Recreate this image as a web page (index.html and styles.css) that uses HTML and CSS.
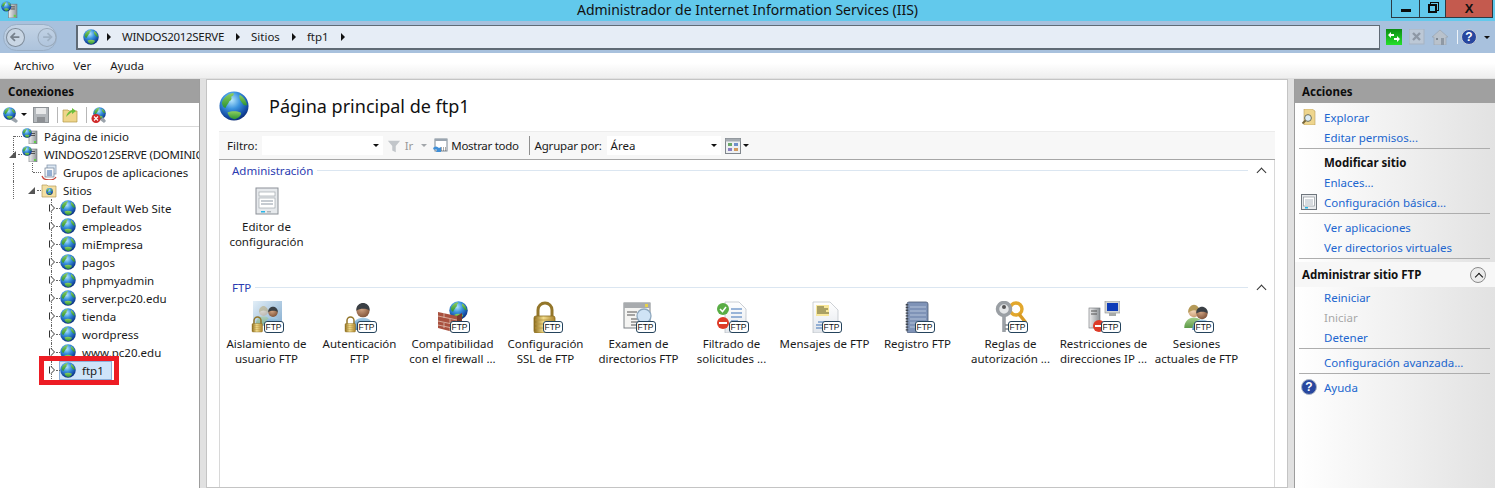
FILE: index.html
```html
<!DOCTYPE html>
<html lang="es">
<head>
  <meta charset="UTF-8">
  <title>Administrador de Internet Information Services (IIS)</title>
  <link rel="stylesheet" href="styles.css">
</head>
<body>
  <svg class="sprites" width="0" height="0">
    <defs>
      <radialGradient id="sea" cx="42%" cy="30%" r="75%">
        <stop offset="0" stop-color="#b5e6fc"/>
        <stop offset=".4" stop-color="#3a93de"/>
        <stop offset=".8" stop-color="#12479f"/>
        <stop offset="1" stop-color="#0a2466"/>
      </radialGradient>
      <linearGradient id="land" x1="0" y1="0" x2="0" y2="1">
        <stop offset="0" stop-color="#8fd05e"/>
        <stop offset="1" stop-color="#2c9334"/>
      </linearGradient>
      <linearGradient id="lock" x1="0" y1="0" x2="1" y2="0">
        <stop offset="0" stop-color="#8a6a1c"/>
        <stop offset=".45" stop-color="#f2dc8c"/>
        <stop offset="1" stop-color="#a8802a"/>
      </linearGradient>
      <linearGradient id="paper" x1="0" y1="0" x2="0" y2="1">
        <stop offset="0" stop-color="#ffffff"/>
        <stop offset="1" stop-color="#e3e7ec"/>
      </linearGradient>
      <linearGradient id="tower" x1="0" y1="0" x2="1" y2="0">
        <stop offset="0" stop-color="#f0f0f0"/>
        <stop offset="1" stop-color="#8d9296"/>
      </linearGradient>
      <linearGradient id="shirt" x1="0" y1="0" x2="0" y2="1">
        <stop offset="0" stop-color="#a9cfe8"/>
        <stop offset="1" stop-color="#4f88b8"/>
      </linearGradient>
      <linearGradient id="shirt-green" x1="0" y1="0" x2="0" y2="1">
        <stop offset="0" stop-color="#a6cf8c"/>
        <stop offset="1" stop-color="#5d9a48"/>
      </linearGradient>
      <radialGradient id="skin" cx="40%" cy="35%" r="70%">
        <stop offset="0" stop-color="#d4a684"/>
        <stop offset="1" stop-color="#7e5238"/>
      </radialGradient>
      <radialGradient id="skin-light" cx="40%" cy="35%" r="70%">
        <stop offset="0" stop-color="#f6dcc0"/>
        <stop offset="1" stop-color="#c99c72"/>
      </radialGradient>
      <linearGradient id="green-btn" x1="0" y1="0" x2="0" y2="1">
        <stop offset="0" stop-color="#0b8d12"/>
        <stop offset="1" stop-color="#25e02a"/>
      </linearGradient>
    </defs>

    <symbol id="globe" viewBox="0 0 32 32">
      <circle cx="16" cy="16" r="15.500" fill="url(#sea)"/>
      <path d="M3 13c1-5 6-10 12-11 2 1 0 3-2 4 1 2 0 4-2 5-1 3-3 4-4 7-2 0-3-2-4-5z" fill="url(#land)"/>
      <path d="M9 23c4-2 10-2 14 0 2 1-1 6-6 7-4 0-7-3-8-7z" fill="url(#land)"/>
      <path d="M22 4c4 2 7 6 8 11-2 1-4 0-5-2-2-2-4-5-3-9z" fill="url(#land)"/>
    </symbol>

    <symbol id="server" viewBox="0 0 16 16">
      <rect x="7" y="3" width="8" height="13" fill="url(#tower)" stroke="#70767b" stroke-width=".6"/>
      <rect x="9" y="5" width="4" height="1" fill="#555"/>
      <rect x="9" y="7" width="4" height="1" fill="#555"/>
      <rect x="12" y="13" width="2" height="2" fill="#5fce4a"/>
      <use href="#globe" x="0" y="0" width="10" height="10"/>
    </symbol>

    <symbol id="pools" viewBox="0 0 16 16">
      <rect x="6" y="1" width="9" height="9" fill="#dbe7f3" stroke="#7b8ea5" stroke-width=".7"/>
      <rect x="4" y="4" width="9" height="9" fill="url(#paper)" stroke="#6b7c92" stroke-width=".7"/>
      <path d="M6 7h5M6 9h5M6 11h5" stroke="#3d6fb0"/>
      <path d="M1 12c1 3 4 4 7 4s6-1 7-3" fill="none" stroke="#c6443a" stroke-width="1.300"/>
    </symbol>

    <symbol id="sites" viewBox="0 0 16 16">
      <path d="M1 3h5l1 1h8v11H1z" fill="#f3dfa2" stroke="#b69a56" stroke-width=".7"/>
      <use href="#globe" x="5" y="6" width="7" height="7"/>
    </symbol>

    <symbol id="folder-find" viewBox="0 0 16 16">
      <path d="M3 0h8l3 2v14H3z" fill="#eed58d" stroke="#b9a05c" stroke-width=".6"/>
      <circle cx="7" cy="9" r="3.400" fill="#dcecf7" stroke="#6f6f55"/>
      <path d="M4.500 11.500 1.500 14.500" stroke="#75653a" stroke-width="1.800"/>
    </symbol>

    <symbol id="form" viewBox="0 0 32 32">
      <rect x="5" y="4" width="22" height="26" fill="#e6e9ec" stroke="#8b9097"/>
      <rect x="8" y="8" width="16" height="4" fill="#fff" stroke="#a2a8ae" stroke-width=".7"/>
      <rect x="8" y="14" width="16" height="10" fill="#fff" stroke="#a2a8ae" stroke-width=".7"/>
      <path d="M10 17h12M10 20h12" stroke="#8d98a4"/>
      <rect x="10" y="27" width="4" height="1.500" fill="#28b5e8"/>
      <rect x="16" y="27" width="4" height="1.500" fill="#b0b5ba"/>
    </symbol>

    <symbol id="form-small" viewBox="0 0 16 16">
      <rect x=".5" y=".5" width="15" height="15" fill="#e9ebed" stroke="#6f767d"/>
      <rect x="2.500" y="3" width="11" height="9" fill="#fff" stroke="#8d949b" stroke-width=".7"/>
      <path d="M4 6h8M4 8h8M4 10h8" stroke="#8d98a4" stroke-width=".7"/>
      <rect x="4" y="13" width="3" height="1.500" fill="#28b5e8"/>
    </symbol>

    <symbol id="padlock" viewBox="0 0 32 32">
      <path d="M8 17v-8a7 7 0 0 1 14 0v8" fill="none" stroke="#93762a" stroke-width="3"/>
      <rect x="4" y="15" width="21" height="17" rx="2" fill="url(#lock)" stroke="#8a6d1e" stroke-width=".8"/>
      <path d="M5 19h19M5 23h19M5 27h19" stroke="#b8963f" stroke-width=".8"/>
    </symbol>

    <symbol id="person" viewBox="0 0 32 32">
      <path d="M3 32c0-9 6-14 13-14s13 5 13 14z" fill="url(#shirt)"/>
      <circle cx="16" cy="10" r="7.500" fill="url(#skin)"/>
      <path d="M8.500 10c-1-6 4-9 7.500-9s8.500 3 7.500 9c-3-3-11-3-15 0z" fill="#3a3f44"/>
    </symbol>

    <symbol id="person-light" viewBox="0 0 32 32">
      <path d="M3 32c0-9 6-14 13-14s13 5 13 14z" fill="url(#shirt-green)"/>
      <circle cx="16" cy="10" r="7.500" fill="url(#skin-light)"/>
      <path d="M8.500 12c-1-7 4-11 7.500-11s8.500 4 7.500 11c-3-5-11-5-15 0z" fill="#b59a58"/>
    </symbol>

    <symbol id="firewall" viewBox="0 0 32 32">
      <use href="#globe" x="12" y="0" width="19" height="19"/>
      <path d="M1 11l19 4v17L1 27z" fill="#a9513f"/>
      <path d="M20 15l5-3v15l-5 5z" fill="#7e3a2c"/>
      <path d="M1 15l19 4M1 20l19 4M1 24l19 4M7 12v5M13 18v5M7 22v5M13 26v4" stroke="#e0c2b4" stroke-width=".8"/>
    </symbol>

    <symbol id="browse" viewBox="0 0 32 32">
      <rect x="1" y="2" width="26" height="25" fill="#f4f4f2" stroke="#7d8186"/>
      <rect x="1" y="2" width="26" height="5" fill="#a8abae"/>
      <rect x="22" y="3" width="3" height="3" fill="#e6d24a"/>
      <path d="M4 11h10M4 14h8M8 18h8M8 21h8M8 24h8" stroke="#555"/>
      <circle cx="21" cy="15" r="7" fill="#cfe3f5" stroke="#8ea8bf" stroke-width="1.300"/>
    </symbol>

    <symbol id="request-filter" viewBox="0 0 32 32">
      <path d="M9 1h14l7 7v24H9z" fill="url(#paper)" stroke="#b4bac1" stroke-width=".7"/>
      <path d="M15 8h11M15 12h11M15 16h11M15 20h7" stroke="#3c73b8" stroke-width="1.200"/>
      <circle cx="7" cy="8" r="6" fill="#59ad45"/>
      <path d="M4 8l2.500 2.500L10 6" fill="none" stroke="#fff" stroke-width="1.500"/>
      <circle cx="7" cy="22" r="6" fill="#de3b28"/>
      <rect x="3" y="21" width="8" height="2" fill="#fff"/>
    </symbol>

    <symbol id="message" viewBox="0 0 32 32">
      <path d="M4 1h17l8 8v23H4z" fill="url(#paper)" stroke="#b8bdc3" stroke-width=".7"/>
      <rect x="7" y="4" width="13" height="11" fill="#f8e79a"/>
      <path d="M8 6h7M8 8h11M8 10h9M8 12h12" stroke="#5d5a2c"/>
      <path d="M9 21h14M7 24h12M7 27h10" stroke="#3c73b8" stroke-width="1.200"/>
    </symbol>

    <symbol id="logbook" viewBox="0 0 32 32">
      <rect x="5" y="1" width="21" height="31" rx="2" fill="#7f93b7" stroke="#4a5872" stroke-width=".8"/>
      <path d="M8 6h16M8 10h16M8 14h16M8 18h16M8 22h16M8 26h16" stroke="#b5c3da"/>
      <path d="M5 3v27" stroke="#40464f" stroke-width="2.600" stroke-dasharray="1.400 1.400"/>
    </symbol>

    <symbol id="keys" viewBox="0 0 32 32">
      <circle cx="21" cy="8" r="6" fill="none" stroke="#e2a72c" stroke-width="3.400"/>
      <path d="M24 13l7 9" stroke="#d89a24" stroke-width="3.400"/>
      <circle cx="9" cy="8" r="6.500" fill="#e4e6e8" stroke="#9a9fa4" stroke-width="3.500"/>
      <circle cx="9" cy="6" r="2" fill="#555"/>
      <path d="M9 14v17" stroke="#9ba0a6" stroke-width="3.600"/>
      <path d="M10 24h3M10 28h3" stroke="#81868b" stroke-width="1.500"/>
    </symbol>

    <symbol id="ip-limits" viewBox="0 0 32 32">
      <rect x="17" y="0" width="15" height="12" fill="#d4d6d4" stroke="#8a8d8b" stroke-width=".6"/>
      <rect x="19" y="2" width="11" height="8" fill="#0e3cb8"/>
      <rect x="21" y="12" width="7" height="3" fill="#a7aaa8"/>
      <rect x="1" y="7" width="11" height="20" fill="url(#tower)" stroke="#6d7175" stroke-width=".6"/>
      <path d="M3 10h6M3 13h6" stroke="#555"/>
      <circle cx="11" cy="25" r="6" fill="#de3b28"/>
      <rect x="7" y="24" width="8" height="2" fill="#fff"/>
    </symbol>

    <symbol id="arrow-left" viewBox="0 0 16 16">
      <path d="M13 8H4M8 3.500 3.500 8 8 12.500" fill="none" stroke="currentColor" stroke-width="2"/>
    </symbol>
  </svg>

  <div class="app">
    <header class="titlebar">
      <svg class="app-icon"><use href="#server"/></svg>
      <span class="title-text">Administrador de Internet Information Services (IIS)</span>
      <div class="win-buttons">
        <span class="win-btn win-min"><i></i></span>
        <span class="win-btn win-max"><i></i></span>
        <span class="win-btn win-close">X</span>
      </div>
    </header>

    <div class="navbar">
      <div class="nav-pill">
        <span class="nav-round nav-back"><svg><use href="#arrow-left"/></svg></span>
        <span class="nav-round nav-fwd"><svg><use href="#arrow-left"/></svg></span>
      </div>
      <div class="address">
        <svg class="icon16 addr-globe"><use href="#globe"/></svg>
        <span class="crumb-arrow"></span><span class="crumb crumb-server">WINDOS2012SERVE</span>
        <span class="crumb-arrow"></span><span class="crumb">Sitios</span>
        <span class="crumb-arrow"></span><span class="crumb">ftp1</span>
        <span class="crumb-arrow"></span>
      </div>
      <div class="nav-tools">
        <svg class="icon16" viewBox="0 0 16 16"><rect width="16" height="16" fill="url(#green-btn)"/><path d="M2 6l3-3v2h3v2H5v2zM14 10l-3 3v-2H8V9h3V7z" fill="#fff"/></svg>
        <svg class="icon16" viewBox="0 0 16 16"><rect width="15" height="15" fill="#bcc8d6" stroke="#a6b3c2"/><path d="M4 4l7 7M11 4l-7 7" stroke="#8e98a5" stroke-width="2.400"/></svg>
        <svg class="icon16" viewBox="0 0 16 16"><path d="M8 1 0 8h2v8h12V8h2z" fill="#b9c2cc" stroke="#98a2ad" stroke-width=".6"/><rect x="4" y="9" width="2" height="2" fill="#7f8993"/><rect x="9" y="9" width="3" height="7" fill="#8f99a4"/></svg>
        <span class="tool-sep"></span>
        <svg class="icon16 help-big" viewBox="0 0 16 16"><circle cx="8" cy="8" r="7.500" fill="#28479f" stroke="#c6cdd8"/><text x="8" y="12" class="help-mark">?</text></svg>
        <span class="caret caret-black"></span>
      </div>
    </div>

    <nav class="menubar">
      <span>Archivo</span>
      <span>Ver</span>
      <span>Ayuda</span>
    </nav>

    <main class="workspace">
      <aside class="connections">
        <h2 class="panel-head">Conexiones</h2>
        <div class="conn-tools">
          <svg class="icon16" viewBox="0 0 16 16"><use href="#globe" width="13" height="13"/><path d="M8 13l3-3 4 4-2 2z" fill="#9aa3ab"/></svg>
          <span class="caret caret-black"></span>
          <svg class="icon16" viewBox="0 0 16 16"><rect x=".5" y=".5" width="15" height="15" fill="#b4b8bc" stroke="#8e9296"/><rect x="3" y="1" width="10" height="6" fill="#e8e9ea"/><rect x="4" y="10" width="8" height="5" fill="#8d9094"/></svg>
          <span class="conn-sep"></span>
          <svg class="icon16" viewBox="0 0 16 16"><path d="M1 3h5l1 1h8v11H1z" fill="#efd58a" stroke="#b19848" stroke-width=".7"/><path d="M4 10c1-4 3-6 6-7V1l4 3-4 3V5c-2 1-4 3-6 5z" fill="#6cbf3c"/></svg>
          <span class="conn-sep"></span>
          <svg class="icon16" viewBox="0 0 16 16"><use href="#globe" x="2" y="0" width="13" height="13"/><path d="M9 13l3-3 3 4-2 2z" fill="#9aa3ab"/><circle cx="5" cy="11.500" r="4.500" fill="#cf2a2a"/><path d="M3 9.500l4 4M7 9.500l-4 4" stroke="#fff" stroke-width="1.100"/></svg>
        </div>
        <ul class="tree">
          <li class="tree-row lvl0 leaf-top"><span class="twist"></span><svg class="icon16"><use href="#server"/></svg><span class="tree-label">Página de inicio</span></li>
          <li class="tree-row lvl0"><span class="twist open"></span><svg class="icon16"><use href="#server"/></svg><span class="tree-label tree-server">WINDOS2012SERVE (DOMINIO\Administrador)</span></li>
          <li class="tree-row lvl1"><span class="twist"></span><svg class="icon16"><use href="#pools"/></svg><span class="tree-label">Grupos de aplicaciones</span></li>
          <li class="tree-row lvl1"><span class="twist open"></span><svg class="icon16"><use href="#sites"/></svg><span class="tree-label">Sitios</span></li>
          <li class="tree-row lvl2"><span class="twist closed"></span><svg class="icon16"><use href="#globe"/></svg><span class="tree-label">Default Web Site</span></li>
          <li class="tree-row lvl2"><span class="twist closed"></span><svg class="icon16"><use href="#globe"/></svg><span class="tree-label">empleados</span></li>
          <li class="tree-row lvl2"><span class="twist closed"></span><svg class="icon16"><use href="#globe"/></svg><span class="tree-label">miEmpresa</span></li>
          <li class="tree-row lvl2"><span class="twist closed"></span><svg class="icon16"><use href="#globe"/></svg><span class="tree-label">pagos</span></li>
          <li class="tree-row lvl2"><span class="twist closed"></span><svg class="icon16"><use href="#globe"/></svg><span class="tree-label">phpmyadmin</span></li>
          <li class="tree-row lvl2"><span class="twist closed"></span><svg class="icon16"><use href="#globe"/></svg><span class="tree-label">server.pc20.edu</span></li>
          <li class="tree-row lvl2"><span class="twist closed"></span><svg class="icon16"><use href="#globe"/></svg><span class="tree-label">tienda</span></li>
          <li class="tree-row lvl2"><span class="twist closed"></span><svg class="icon16"><use href="#globe"/></svg><span class="tree-label">wordpress</span></li>
          <li class="tree-row lvl2"><span class="twist closed"></span><svg class="icon16"><use href="#globe"/></svg><span class="tree-label">www.pc20.edu</span></li>
          <li class="tree-row lvl2 selected"><span class="twist closed"></span><span class="sel-box"><svg class="icon16"><use href="#globe"/></svg><span class="tree-label">ftp1</span></span><span class="red-mark"></span></li>
        </ul>
      </aside>

      <section class="center">
        <div class="page-head">
          <svg class="page-globe"><use href="#globe"/></svg>
          <h1>Página principal de ftp1</h1>
        </div>
        <div class="filter-bar">
          <span class="f-label">Filtro:</span>
          <span class="f-input f-filter"><span></span><span class="caret caret-black"></span></span>
          <svg class="funnel" viewBox="0 0 16 16"><path d="M1 2h14L10 8v7l-4-2V8z" fill="#c2c6ca"/></svg>
          <span class="f-muted">Ir</span>
          <span class="caret caret-grey"></span>
          <svg class="icon16 f-show" viewBox="0 0 16 16"><rect x="3" y="1" width="12" height="12" fill="#fff" stroke="#7b8793"/><rect x="3" y="1" width="12" height="2" fill="#9aa5b0"/><path d="M1 10c2-2 4-2 6 0l2-1v5H4l1-2c-1-1-2-1-3 0z" fill="#3f8fd8"/><path d="M9 10h5M9 12h5" stroke="#555" stroke-dasharray="1 1"/></svg>
          <span class="f-show-text">Mostrar todo</span>
          <span class="f-sep"></span>
          <span class="f-label f-label-tight">Agrupar por:</span>
          <span class="f-input f-group"><span>Área</span><span class="caret caret-black"></span></span>
          <svg class="icon16 f-view" viewBox="0 0 16 16"><rect x=".5" y=".5" width="15" height="15" fill="#eef0f2" stroke="#80868c"/><rect x=".5" y=".5" width="15" height="3" fill="#a5abb1"/><rect x="3" y="5" width="4" height="3" fill="#6ba86b"/><rect x="9" y="5" width="4" height="3" fill="#6f8fc9"/><rect x="3" y="10" width="4" height="3" fill="#8a7fc2"/><rect x="9" y="10" width="4" height="3" fill="#d39a5e"/></svg>
          <span class="caret caret-black"></span>
        </div>

        <div class="features">
          <div class="group group-admin">
            <div class="group-head"><span>Administración</span><i class="rule"></i><b class="chev"></b></div>
            <div class="tiles">
              <div class="tile">
                <div class="tile-icon"><svg><use href="#form"/></svg></div>
                <p>Editor de configuración</p>
              </div>
            </div>
          </div>

          <div class="group">
            <div class="group-head"><span>FTP</span><i class="rule"></i><b class="chev"></b></div>
            <div class="tiles">
              <div class="tile">
                <div class="tile-icon"><i class="iso-back"></i><svg class="iso-ghost"><use href="#person-light"/></svg><svg class="iso-front"><use href="#person"/></svg><svg class="lock-small"><use href="#padlock"/></svg><span class="ftp">FTP</span></div>
                <p>Aislamiento de usuario FTP</p>
              </div>
              <div class="tile">
                <div class="tile-icon"><svg class="auth-person"><use href="#person"/></svg><svg class="lock-small"><use href="#padlock"/></svg><span class="ftp">FTP</span></div>
                <p>Autenticación FTP</p>
              </div>
              <div class="tile">
                <div class="tile-icon"><svg><use href="#firewall"/></svg><span class="ftp">FTP</span></div>
                <p>Compatibilidad con el firewall ...</p>
              </div>
              <div class="tile">
                <div class="tile-icon"><svg><use href="#padlock"/></svg><span class="ftp">FTP</span></div>
                <p>Configuración SSL de FTP</p>
              </div>
              <div class="tile">
                <div class="tile-icon"><svg><use href="#browse"/></svg><span class="ftp">FTP</span></div>
                <p>Examen de directorios FTP</p>
              </div>
              <div class="tile">
                <div class="tile-icon"><svg><use href="#request-filter"/></svg><span class="ftp">FTP</span></div>
                <p>Filtrado de solicitudes ...</p>
              </div>
              <div class="tile">
                <div class="tile-icon"><svg><use href="#message"/></svg><span class="ftp">FTP</span></div>
                <p>Mensajes de FTP</p>
              </div>
              <div class="tile">
                <div class="tile-icon"><svg><use href="#logbook"/></svg><span class="ftp">FTP</span></div>
                <p>Registro FTP</p>
              </div>
              <div class="tile">
                <div class="tile-icon"><svg><use href="#keys"/></svg><span class="ftp">FTP</span></div>
                <p>Reglas de autorización ...</p>
              </div>
              <div class="tile">
                <div class="tile-icon"><svg><use href="#ip-limits"/></svg><span class="ftp">FTP</span></div>
                <p>Restricciones de direcciones IP ...</p>
              </div>
              <div class="tile">
                <div class="tile-icon"><svg class="pair-back"><use href="#person-light"/></svg><svg class="pair-front"><use href="#person"/></svg><span class="ftp">FTP</span></div>
                <p>Sesiones actuales de FTP</p>
              </div>
            </div>
          </div>
        </div>
      </section>

      <aside class="actions">
        <h2 class="panel-head">Acciones</h2>
        <div class="action-list">
          <a class="act"><svg class="icon16 act-icon"><use href="#folder-find"/></svg>Explorar</a>
          <a class="act">Editar permisos...</a>
          <hr>
          <div class="act act-title">Modificar sitio</div>
          <a class="act">Enlaces...</a>
          <a class="act"><svg class="icon16 act-icon"><use href="#form-small"/></svg>Configuración básica...</a>
          <hr>
          <a class="act">Ver aplicaciones</a>
          <a class="act">Ver directorios virtuales</a>
          <hr class="hr-tight">
          <div class="act-group">Administrar sitio FTP<span class="collapse"></span></div>
          <a class="act">Reiniciar</a>
          <a class="act act-off">Iniciar</a>
          <a class="act">Detener</a>
          <hr>
          <a class="act">Configuración avanzada...</a>
          <hr>
          <a class="act"><svg class="icon16 act-icon" viewBox="0 0 16 16"><circle cx="8" cy="8" r="7.500" fill="#28479f" stroke="#aab4c4"/><text x="8" y="12" class="help-mark">?</text></svg>Ayuda</a>
        </div>
      </aside>
    </main>
  </div>
</body>
</html>
```

FILE: styles.css
```css
* {
  box-sizing: border-box;
}
html, body {
  margin: 0;
  height: 100%;
  overflow: hidden;
}
body {
  font-family: "Noto Sans", "Open Sans", sans-serif;
  font-size: 11.5px;
  color: #1a1a1a;
}
.sprites {
  display: block;
  height: 0;
  position: absolute;
}
svg {
  display: block;
  flex: none;
}
.icon16 {
  width: 16px;
  height: 16px;
}
.app {
  display: flex;
  flex-direction: column;
  height: 488px;
}

/* window title */
.titlebar {
  height: 21px;
  background: #62c9ec;
  display: flex;
  position: relative;
  justify-content: center;
  flex: none;
}
.app-icon {
  position: absolute;
  left: 1px;
  top: 1px;
  width: 17px;
  height: 17px;
}
.title-text {
  font-size: 14px;
  line-height: 20px;
  color: #111;
}
.win-buttons {
  position: absolute;
  right: 2px;
  top: 0;
  display: flex;
  height: 18px;
  border: 1px solid #2b3a44;
  border-top: 0;
}
.win-btn {
  display: flex;
  align-items: center;
  justify-content: center;
  border-right: 1px solid #2b3a44;
}
.win-min { width: 28px; }
.win-max { width: 26px; }
.win-close {
  width: 46px;
  border-right: 0;
  background: #c45a4e;
  font: bold 13px "Liberation Sans", sans-serif;
  color: #111;
}
.win-min i {
  width: 10px;
  height: 3px;
  background: #0c0c0c;
  margin-top: 3px;
}
.win-max i {
  width: 9px;
  height: 9px;
  border: 2px solid #0c0c0c;
  box-shadow: 2px -2px 0 -1px #62c9ec, 2px -2px 0 0 #0c0c0c;
}

/* back/forward and address */
.navbar {
  height: 32px;
  background: #a8c1dd;
  display: flex;
  align-items: center;
  flex: none;
  padding-left: 3px;
}
.nav-pill {
  width: 54px;
  height: 27px;
  border-radius: 14px;
  background: linear-gradient(#c3d3e5, #adc3dc);
  border: 1px solid #9aafc6;
  display: flex;
  align-items: center;
  gap: 13px;
  padding-left: 2px;
}
.nav-round {
  width: 19px;
  height: 19px;
  border-radius: 50%;
  border: 1px solid #7e8b99;
  background: #c9d6e4;
  display: flex;
  align-items: center;
  justify-content: center;
  color: #77818c;
}
.nav-round svg {
  width: 14px;
  height: 14px;
}
.nav-fwd {
  border-color: #99a9ba;
  background: none;
  color: #9fb1c4;
  transform: scaleX(-1);
}
.address {
  margin-left: 19px;
  width: 1304px;
  height: 25px;
  background: #e6edf6;
  border: 1px solid #5f6a75;
  border-bottom-width: 2px;
  border-left-width: 2px;
  display: flex;
  align-items: center;
  padding-left: 5px;
}
.addr-globe {
  margin-right: -4px;
}
.crumb-arrow {
  width: 0;
  height: 0;
  border-left: 4px solid #111;
  border-top: 4px solid transparent;
  border-bottom: 4px solid transparent;
  margin: 0 11px 0 12px;
}
.crumb-server {
  letter-spacing: -.3px;
}
.nav-tools {
  margin-left: 6px;
  display: flex;
  align-items: center;
  gap: 7px;
}
.tool-sep {
  width: 1px;
  height: 14px;
  background: #eef3f8;
  margin-left: 2px;
  margin-right: -4px;
}
.help-mark {
  font: bold 12px "Liberation Sans", sans-serif;
  fill: #fff;
  text-anchor: middle;
}
.caret {
  width: 0;
  height: 0;
  border-top: 3px solid #111;
  border-left: 3px solid transparent;
  border-right: 3px solid transparent;
  flex: none;
}
.caret-grey {
  border-top-color: #a2a6aa;
}

/* menu */
.menubar {
  height: 25px;
  flex: none;
  background: linear-gradient(#ffffff 40%, #eeeeee);
  display: flex;
  align-items: center;
  gap: 19px;
  padding-left: 14px;
}

/* main panes */
.workspace {
  flex: 1;
  display: flex;
  background: #e1e1e1;
  min-height: 0;
  padding-top: 1px;
}
.panel-head {
  margin: 0;
  height: 24px;
  background: #a0a0a0;
  font-size: 11.5px;
  font-weight: 700;
  line-height: 25px;
  padding-left: 8px;
  color: #0d0d0d;
}
.connections {
  width: 200px;
  flex: none;
  background: #fff;
  border-right: 1px solid #9d9d9d;
  overflow: hidden;
}
.conn-tools {
  height: 24px;
  display: flex;
  align-items: center;
  padding-left: 3px;
  border-bottom: 1px solid #d9d9d9;
}
.conn-tools .caret {
  margin: 0 6px 0 2px;
}
.conn-sep {
  width: 1px;
  height: 16px;
  background: #b7b7b7;
  margin: 0 4px 0 8px;
}
.tree {
  list-style: none;
  margin: 0;
  padding: 0;
}
.tree-row {
  height: 18px;
  display: flex;
  align-items: center;
  position: relative;
  white-space: nowrap;
}
.tree-row::before {
  content: "";
  position: absolute;
  top: 0;
  height: 18px;
  border-left: 1px dotted #666;
}
.tree-row.leaf-top::before {
  top: 9px;
  height: 9px;
  left: 13px;
}
.lvl0 { padding-left: 9px; }
.lvl0::before { left: 13px; height: 9px; }
.lvl1 { padding-left: 28px; }
.lvl1::before { left: 13px; }
.lvl2 { padding-left: 47px; }
.lvl2::before { left: 51px; }
.twist {
  width: 13px;
  height: 9px;
  position: relative;
  flex: none;
}
.twist::after {
  content: "";
  position: absolute;
  left: 9px;
  top: 4px;
  width: 4px;
  border-top: 1px dotted #666;
}
.leaf-top .twist::after { left: 5px; width: 8px; }
.lvl1 .twist:not(.open)::after { left: 5px; width: 8px; }
.lvl1 .twist:not(.open)::before {
  content: "";
  position: absolute;
  left: 4px;
  top: -5px;
  height: 9px;
  border-left: 1px dotted #666;
}
.twist.open::before {
  content: "";
  position: absolute;
  left: 0;
  top: 1px;
  width: 0;
  height: 0;
  border-bottom: 7px solid #555;
  border-left: 7px solid transparent;
}
.twist.closed::before {
  content: "";
  position: absolute;
  left: 3px;
  top: 0;
  width: 0;
  height: 0;
  border-left: 4px solid #fff;
  border-top: 4px solid transparent;
  border-bottom: 4px solid transparent;
  filter: drop-shadow(1px 0 0 #333) drop-shadow(-1px 0 0 #333);
}
.tree-label {
  margin-left: 6px;
}
.tree-server {
  letter-spacing: -.25px;
}
.sel-box {
  display: flex;
  align-items: center;
  height: 19px;
  background: #cfe4f9;
  border: 1px solid #8cb0da;
  margin-left: -1px;
  padding-right: 7px;
}
.red-mark {
  position: absolute;
  left: 39px;
  top: -5px;
  width: 80px;
  height: 29px;
  border: 5px solid #ed1c24;
}

/* center */
.center {
  width: 1082px;
  margin-left: 6px;
  flex: none;
  background: #fff;
  border: 1px solid #c4c4c4;
  display: flex;
  flex-direction: column;
  padding-left: 12px;
  padding-right: 12px;
  overflow: hidden;
}
.page-head {
  height: 51px;
  flex: none;
  display: flex;
  align-items: center;
}
.page-globe {
  width: 30px;
  height: 32px;
}
.page-head h1 {
  margin: 0 0 0 20px;
  font-size: 18px;
  font-weight: 400;
  color: #111;
}
.filter-bar {
  height: 29px;
  flex: none;
  display: flex;
  align-items: center;
  background: #f7f7f7;
  border-top: 1px solid #ececec;
  border-bottom: 1px solid #a6a6a6;
  padding-left: 8px;
}
.f-input {
  height: 19px;
  background: #fff;
  display: flex;
  align-items: center;
  justify-content: space-between;
  padding: 0 4px;
}
.f-filter {
  width: 121px;
  margin-left: 4px;
}
.f-label-tight {
  letter-spacing: -.2px;
}
.f-group {
  width: 114px;
  margin-left: 5px;
}
.funnel {
  width: 14px;
  height: 14px;
  margin-left: 4px;
}
.f-muted {
  color: #9a9a9a;
  margin-left: 4px;
}
.caret-grey {
  margin-left: 8px;
}
.f-show {
  margin-left: 5px;
}
.f-show-text {
  margin-left: 3px;
  letter-spacing: -.3px;
}
.f-sep {
  width: 1px;
  height: 19px;
  background: #8f8f8f;
  margin: 0 5px 0 10px;
}
.f-view {
  margin: 0 2px 0 4px;
}
.features {
  flex: 1;
  border-left: 1px solid #d8d8d8;
  border-right: 1px solid #d8d8d8;
}
.group-head {
  height: 20px;
  display: flex;
  align-items: center;
  padding-left: 12px;
  color: #2a3bb0;
}
.rule {
  flex: 1;
  height: 1px;
  background: #dbe6f1;
  margin-left: 4px;
}
.chev {
  width: 7px;
  height: 7px;
  border-left: 1.500px solid #333;
  border-top: 1.500px solid #333;
  transform: rotate(45deg);
  margin: 4px 9px 0 10px;
}
.group-admin {
  height: 117px;
}
.tiles {
  display: flex;
}
.tile {
  width: 93px;
  flex: none;
  display: flex;
  flex-direction: column;
  align-items: center;
  padding-top: 4px;
}
.tile-icon {
  width: 32px;
  height: 32px;
  position: relative;
}
.tile-icon svg {
  position: absolute;
  left: 0;
  top: 0;
  width: 32px;
  height: 32px;
}
.tile-icon .lock-small {
  width: 16px;
  height: 20px;
  left: -1px;
  top: 13px;
}
.tile-icon .auth-person {
  left: 5px;
  top: 0;
  width: 28px;
  height: 30px;
}
.iso-back {
  position: absolute;
  left: 2px;
  top: 0;
  width: 29px;
  height: 25px;
  background: linear-gradient(135deg, #e2eef7, #86aed0);
}
.tile-icon .iso-ghost {
  left: 3px;
  top: 3px;
  width: 19px;
  height: 22px;
  opacity: .45;
}
.tile-icon .iso-front {
  left: 12px;
  top: 3px;
  width: 20px;
  height: 24px;
}
.tile-icon .pair-back {
  width: 24px;
  height: 26px;
  left: 1px;
  top: 2px;
}
.tile-icon .pair-front {
  width: 24px;
  height: 26px;
  left: 9px;
  top: 4px;
}
.ftp {
  position: absolute;
  right: -1px;
  bottom: 0;
  width: 20px;
  height: 12px;
  border: 1px solid #24435c;
  border-radius: 3px;
  background: #fff;
  font: 8.5px/10px "Liberation Sans", sans-serif;
  text-align: center;
  color: #111;
}
.tile p {
  margin: 3px 0 0;
  width: 91px;
  text-align: center;
  line-height: 15px;
  color: #1a1a1a;
}

/* right */
.actions {
  width: 201px;
  margin-left: 6px;
  flex: none;
  border-left: 1px solid #9d9d9d;
  overflow: hidden;
}
.actions .panel-head {
  padding-left: 7px;
}
.action-list {
  height: 100%;
  background: linear-gradient(90deg, #ffffff, #e2e2e2);
  padding-top: 4px;
}
.act {
  display: flex;
  align-items: center;
  height: 20px;
  padding-left: 29px;
  color: #2166cf;
  position: relative;
}
.act-icon {
  position: absolute;
  left: 6px;
  top: 2px;
}
.act-title {
  color: #111;
  font-weight: 700;
}
.act-off {
  color: #a8a8a8;
}
.action-list hr {
  border: 0;
  border-top: 1px solid #adadad;
  margin: 1px 5px 3px 4px;
  height: 0;
}
.action-list .hr-tight {
  margin-bottom: 1px;
}
.act-group {
  height: 25px;
  margin-top: 3px;
  background: #f7f7f7;
  font-weight: 700;
  color: #111;
  padding-left: 7px;
  display: flex;
  align-items: center;
  justify-content: space-between;
  padding-right: 9px;
}
.collapse {
  width: 16px;
  height: 16px;
  border-radius: 50%;
  border: 1px solid #8a8a8a;
  background: #ececec;
  position: relative;
}
.collapse::after {
  content: "";
  position: absolute;
  left: 5px;
  top: 6px;
  width: 5px;
  height: 5px;
  border-left: 1.500px solid #111;
  border-top: 1.500px solid #111;
  transform: rotate(45deg);
}
```
